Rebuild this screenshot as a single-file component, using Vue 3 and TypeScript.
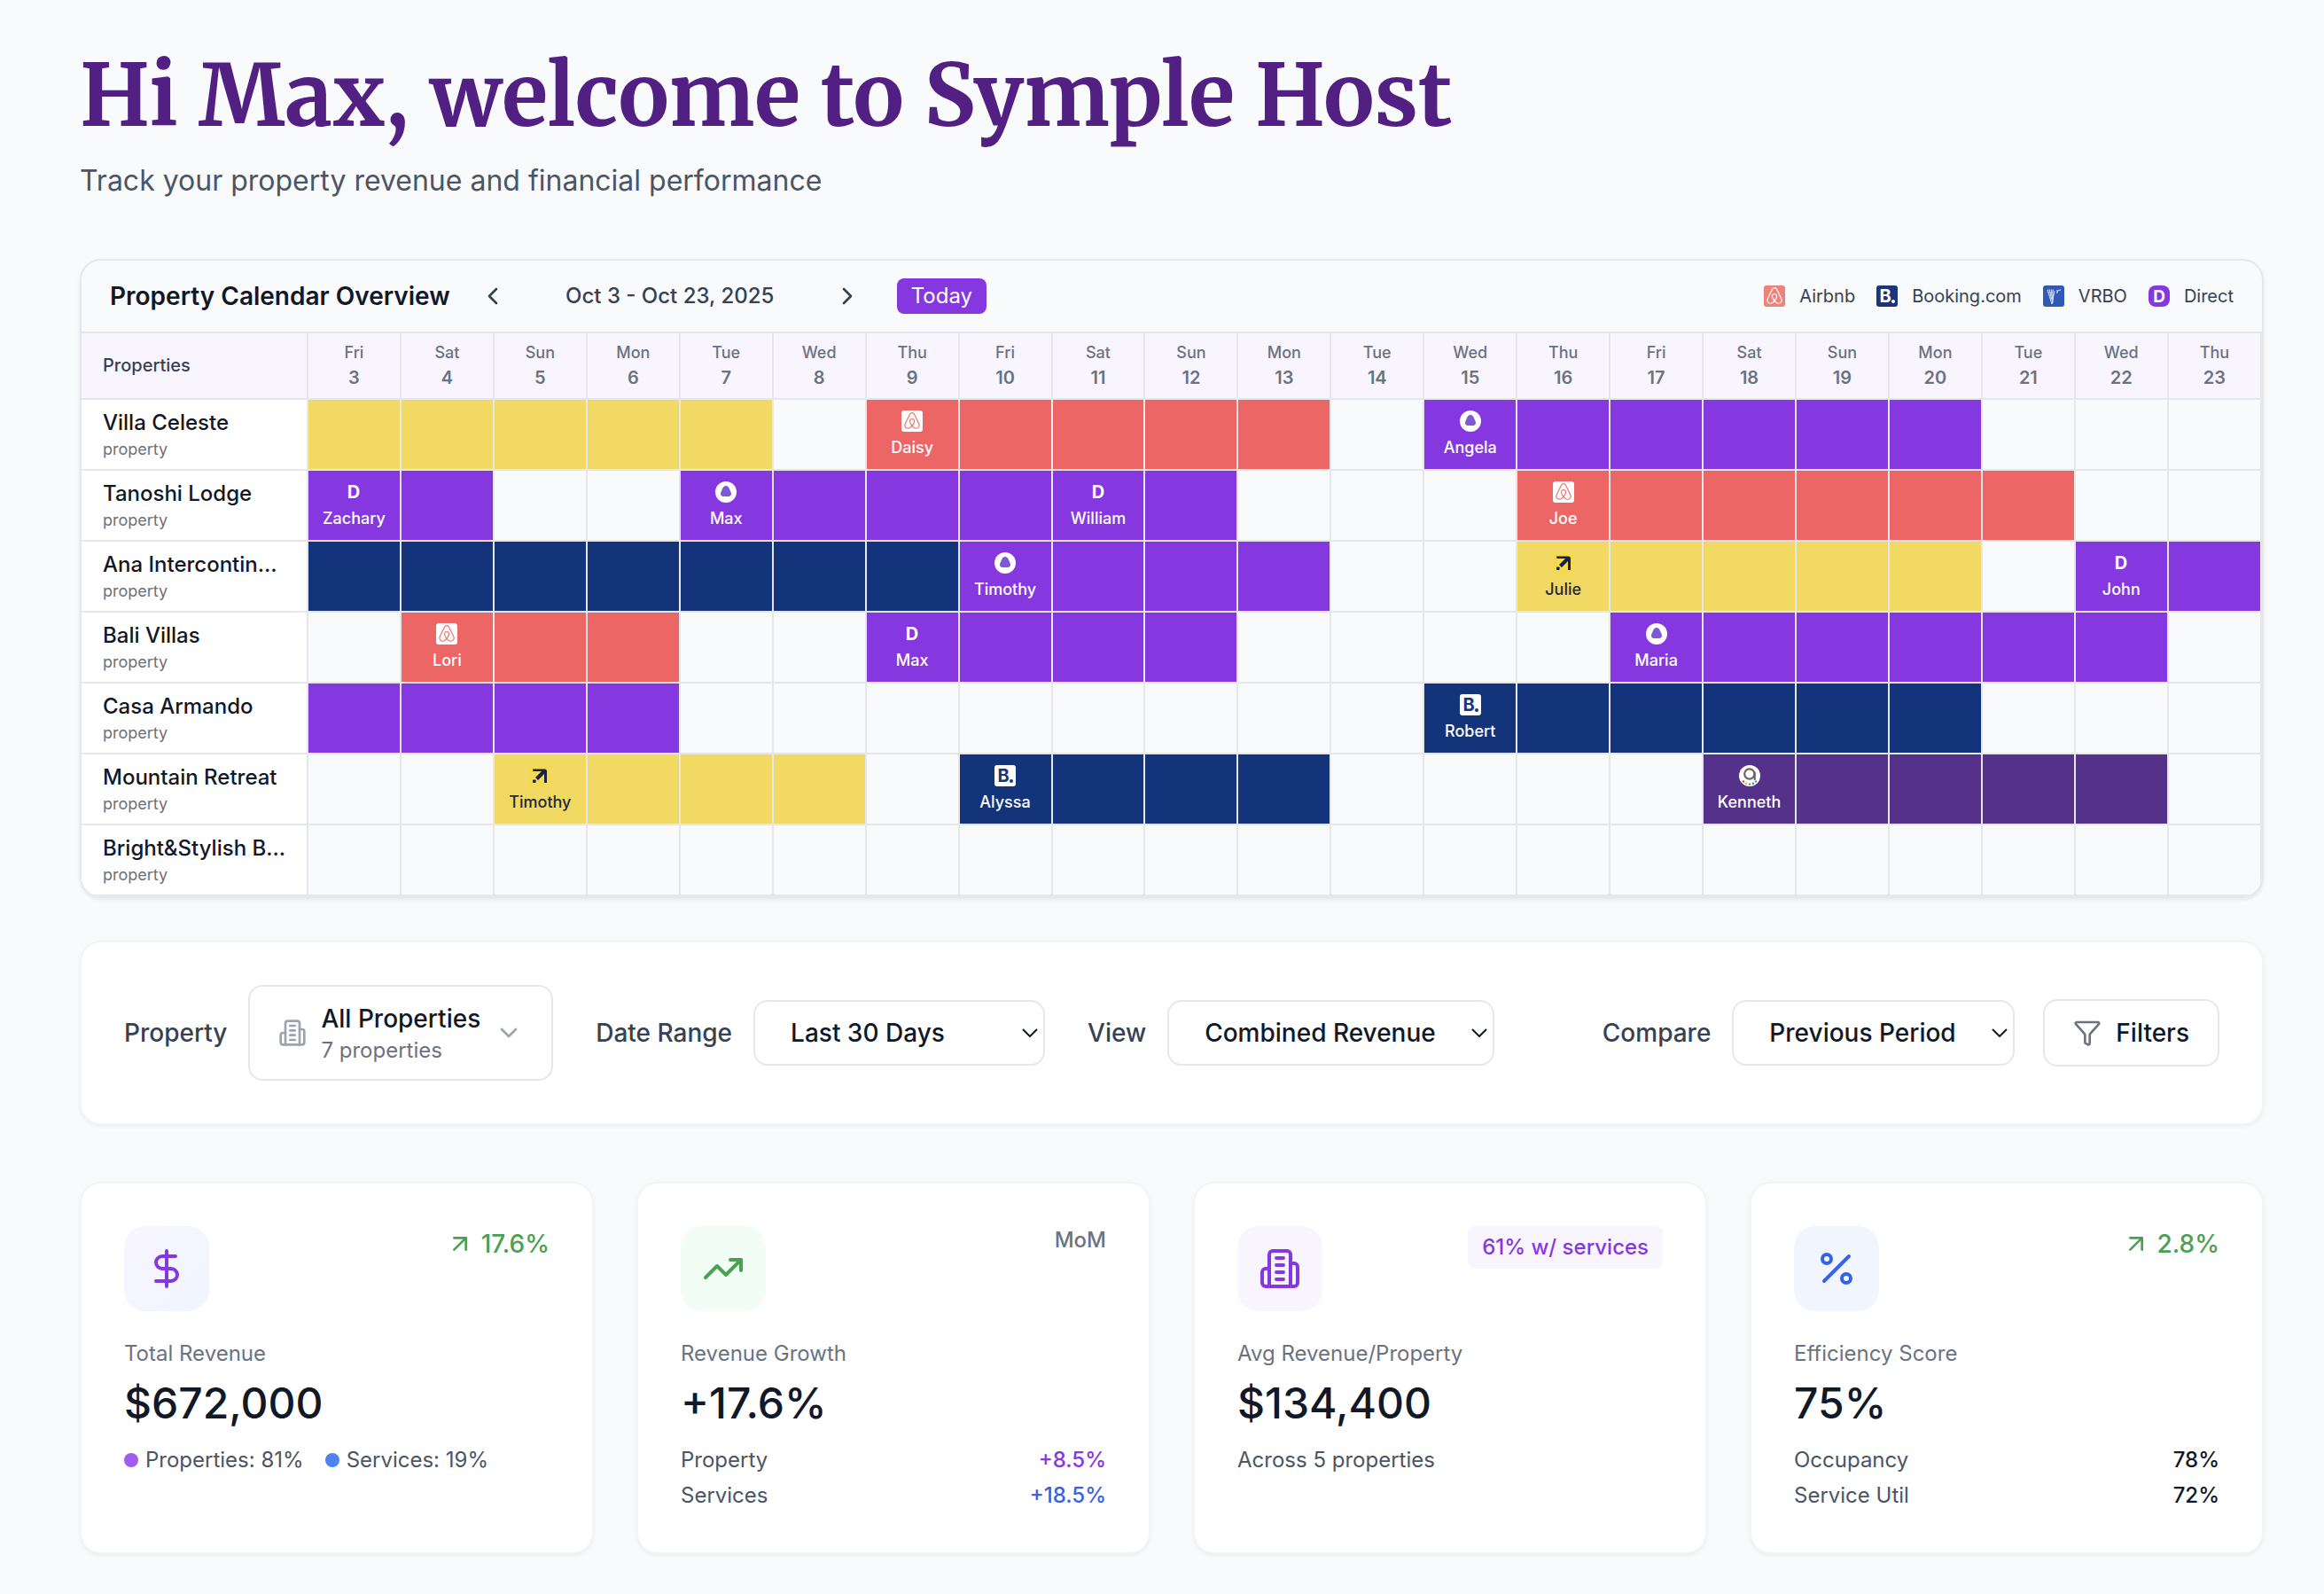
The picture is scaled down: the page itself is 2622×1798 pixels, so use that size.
<script setup lang="ts">
import { h, ref } from 'vue'
import type { FunctionalComponent, VNode } from 'vue'

type Channel = 'airbnb' | 'booking' | 'vrbo' | 'direct' | 'expedia' | 'hostaway' | 'agoda'

interface Booking {
  from: number
  to: number
  tone: 'red' | 'navy' | 'purple' | 'yellow' | 'plum'
  channel?: Channel
  guest?: string
}

interface Property {
  name: string
  bookings: Booking[]
}

const linePaths: Record<string, string[]> = {
  left: ['m15 18-6-6 6-6'],
  right: ['m9 18 6-6-6-6'],
  down: ['m6 9 6 6 6-6'],
  up: ['M7 7h10v10', 'M7 17 17 7'],
  funnel: [
    'M10 20a1 1 0 0 0 .553.895l2 1A1 1 0 0 0 14 21v-7a2 2 0 0 1 .517-1.341L21.74 4.67A1 1 0 0 0 21 3H3a1 1 0 0 0-.742 1.67l7.225 7.989A2 2 0 0 1 10 14z',
  ],
  building: [
    'M6 22V4a2 2 0 0 1 2-2h8a2 2 0 0 1 2 2v18Z',
    'M6 12H4a2 2 0 0 0-2 2v6a2 2 0 0 0 2 2h2',
    'M18 9h2a2 2 0 0 1 2 2v9a2 2 0 0 1-2 2h-2',
    'M10 6h4',
    'M10 10h4',
    'M10 14h4',
    'M10 18h4',
  ],
  dollar: ['M12 2v20', 'M17 5H9.5a3.5 3.5 0 0 0 0 7h5a3.5 3.5 0 0 1 0 7H6'],
  trend: ['M22 7 13.5 15.5 8.5 10.5 2 17', 'M16 7h6v6'],
  percent: [
    'M19 5 5 19',
    'M9 6.5a2.5 2.5 0 1 1-5 0a2.5 2.5 0 1 1 5 0',
    'M20 17.5a2.5 2.5 0 1 1-5 0a2.5 2.5 0 1 1 5 0',
  ],
}

const LineIcon: FunctionalComponent<{ name: string; size: number }> = (props) =>
  h(
    'svg',
    {
      width: props.size,
      height: props.size,
      viewBox: '0 0 24 24',
      fill: 'none',
      stroke: 'currentColor',
      'stroke-width': 2,
      'stroke-linecap': 'round',
      'stroke-linejoin': 'round',
      'aria-hidden': 'true',
    },
    linePaths[props.name].map((d) => h('path', { d })),
  )
LineIcon.props = ['name', 'size']

const airbnbMark =
  'M12.001 18.275c-1.353-1.697-2.148-3.184-2.413-4.457-.263-1.027-.16-1.848.291-2.465.477-.71 1.188-1.056 2.121-1.056s1.643.345 2.12 1.063c.446.61.558 1.432.286 2.465-.291 1.298-1.085 2.785-2.412 4.458zm9.601 1.14c-.185 1.246-1.034 2.28-2.2 2.783-2.253.98-4.483-.583-6.392-2.704 3.157-3.951 3.74-7.028 2.385-9.018-.795-1.14-1.933-1.695-3.394-1.695-2.944 0-4.563 2.49-3.927 5.382.37 1.565 1.352 3.343 2.917 5.332-.98 1.085-1.91 1.856-2.732 2.333-.636.344-1.245.558-1.828.609-2.679.399-4.778-2.2-3.825-4.88.132-.345.395-.98.845-1.961l.025-.053c1.464-3.178 3.242-6.79 5.285-10.795l.053-.132.58-1.116c.45-.822.635-1.19 1.351-1.643.346-.21.77-.315 1.246-.315.954 0 1.698.558 2.016 1.007.158.239.345.557.582.953l.558 1.089.08.159c2.041 4.004 3.821 7.608 5.279 10.794l.026.025.533 1.22.318.764c.243.613.294 1.222.213 1.858zm1.22-2.39c-.186-.583-.505-1.271-.9-2.094v-.03c-1.889-4.006-3.642-7.608-5.307-10.844l-.111-.163C15.317 1.461 14.468 0 12.001 0c-2.44 0-3.476 1.695-4.535 3.898l-.081.16c-1.669 3.236-3.421 6.843-5.303 10.847v.053l-.559 1.22c-.21.504-.317.768-.345.847C-.172 20.74 2.611 24 5.98 24c.027 0 .132 0 .265-.027h.372c1.75-.213 3.554-1.325 5.384-3.317 1.829 1.989 3.635 3.104 5.382 3.317h.372c.133.027.239.027.265.027 3.37.003 6.152-3.261 4.802-6.975z'

const letter = (text: string, x: number, y: number, size: number, fill: string): VNode =>
  h(
    'text',
    { x, y, fill, 'font-size': size, 'font-weight': 700, 'font-family': 'Inter, sans-serif', 'text-anchor': 'middle' },
    text,
  )

const tile = (fill: string, rx: number): VNode => h('rect', { width: 24, height: 24, rx, fill })

// Channel marks on a 24px tile; `solid` puts the brand colour behind the mark.
const ChannelIcon: FunctionalComponent<{ name: Channel; solid?: boolean }> = (props) => {
  let parts: VNode[] = []
  switch (props.name) {
    case 'airbnb':
      parts = [
        tile(props.solid ? '#f0817a' : '#ffffff', 3),
        h('path', { d: airbnbMark, transform: 'translate(2.6 2) scale(.785)', fill: props.solid ? '#ffffff' : '#ec7670' }),
      ]
      break
    case 'booking':
      parts = [
        tile(props.solid ? '#1b357c' : '#ffffff', 3),
        letter('B', 10, 19, 20, props.solid ? '#ffffff' : '#1b357c'),
        h('circle', { cx: 19, cy: 18, r: 2, fill: props.solid ? '#ffffff' : '#1b357c' }),
      ]
      break
    case 'vrbo':
      parts = [
        tile('#3159b8', 3),
        h('path', { d: 'M5 5 10 21M7 5 11 20M9 5 11 16M11 5v14M13 6 10 21', stroke: '#d5def4', 'stroke-width': 1 }),
        h('path', { d: 'M5 5h8M6 8h6M7 11h5M8 14h4', stroke: '#d5def4', 'stroke-width': 1, 'stroke-dasharray': '1 1' }),
        h('path', { d: 'M16 9V5M16 7c1-1 2-2 4-2', stroke: '#ffffff', 'stroke-width': 1, fill: 'none' }),
      ]
      break
    case 'direct':
      parts = props.solid
        ? [tile('#8638e0', 8), letter('D', 12, 19, 19, '#ffffff')]
        : [letter('D', 12, 19, 20, '#ffffff')]
      break
    case 'expedia':
      parts = [
        tile('#f5d94f', 3),
        h('path', { d: 'M4 4.5h13.5a2.5 2.5 0 0 1 2.5 2.5V20h-3V10L10 17 7 14l7-7H4.5Z', fill: '#1b2140' }),
        h('rect', { x: 4, y: 16.5, width: 3.6, height: 3.6, rx: 0.8, fill: '#1b2140' }),
      ]
      break
    case 'hostaway':
      parts = [
        h('circle', { cx: 12, cy: 12, r: 12, fill: '#ffffff' }),
        h('path', {
          d: 'M12 5c2 0 3.2 1.6 4.2 4 .9 2 1.8 3.6 1.8 5 0 2-1.2 3-3.2 3H9.2C7.2 17 6 16 6 14c0-1.4.9-3 1.8-5 1-2.4 2.2-4 4.2-4Z',
          fill: '#7d5ad2',
        }),
      ]
      break
    case 'agoda':
      parts = [
        h('circle', { cx: 12, cy: 12, r: 12, fill: '#ffffff' }),
        h('circle', { cx: 11.8, cy: 10, r: 5.6, fill: 'none', stroke: '#666666', 'stroke-width': 2.2 }),
        h('path', { d: 'M17.8 8v9', stroke: '#666666', 'stroke-width': 2 }),
        ...[
          [5, 18.4, '#c8403c'],
          [8, 20.8, '#e0b030'],
          [12, 21.6, '#4a9c50'],
          [16, 20.8, '#8a5aa8'],
          [19, 18.4, '#3f8fd0'],
        ].map(([cx, cy, fill]) => h('circle', { cx, cy, r: 1.2, fill })),
      ]
      break
  }
  return h('svg', { width: 24, height: 24, viewBox: '0 0 24 24', 'aria-hidden': 'true' }, parts)
}
ChannelIcon.props = { name: String, solid: Boolean }

const legend: { channel: Channel; label: string }[] = [
  { channel: 'airbnb', label: 'Airbnb' },
  { channel: 'booking', label: 'Booking.com' },
  { channel: 'vrbo', label: 'VRBO' },
  { channel: 'direct', label: 'Direct' },
]

const weekdays = ['Sun', 'Mon', 'Tue', 'Wed', 'Thu', 'Fri', 'Sat']
const days = Array.from({ length: 21 }, (_, i) => ({ date: i + 3, weekday: weekdays[(i + 5) % 7] }))

const properties: Property[] = [
  {
    name: 'Villa Celeste',
    bookings: [
      { from: 3, to: 7, tone: 'yellow' },
      { from: 9, to: 13, tone: 'red', channel: 'airbnb', guest: 'Daisy' },
      { from: 15, to: 20, tone: 'purple', channel: 'hostaway', guest: 'Angela' },
    ],
  },
  {
    name: 'Tanoshi Lodge',
    bookings: [
      { from: 3, to: 4, tone: 'purple', channel: 'direct', guest: 'Zachary' },
      { from: 7, to: 10, tone: 'purple', channel: 'hostaway', guest: 'Max' },
      { from: 11, to: 12, tone: 'purple', channel: 'direct', guest: 'William' },
      { from: 16, to: 21, tone: 'red', channel: 'airbnb', guest: 'Joe' },
    ],
  },
  {
    name: 'Ana Intercontin...',
    bookings: [
      { from: 3, to: 9, tone: 'navy' },
      { from: 10, to: 13, tone: 'purple', channel: 'hostaway', guest: 'Timothy' },
      { from: 16, to: 20, tone: 'yellow', channel: 'expedia', guest: 'Julie' },
      { from: 22, to: 23, tone: 'purple', channel: 'direct', guest: 'John' },
    ],
  },
  {
    name: 'Bali Villas',
    bookings: [
      { from: 4, to: 6, tone: 'red', channel: 'airbnb', guest: 'Lori' },
      { from: 9, to: 12, tone: 'purple', channel: 'direct', guest: 'Max' },
      { from: 17, to: 22, tone: 'purple', channel: 'hostaway', guest: 'Maria' },
    ],
  },
  {
    name: 'Casa Armando',
    bookings: [
      { from: 3, to: 6, tone: 'purple' },
      { from: 15, to: 20, tone: 'navy', channel: 'booking', guest: 'Robert' },
    ],
  },
  {
    name: 'Mountain Retreat',
    bookings: [
      { from: 5, to: 8, tone: 'yellow', channel: 'expedia', guest: 'Timothy' },
      { from: 10, to: 13, tone: 'navy', channel: 'booking', guest: 'Alyssa' },
      { from: 18, to: 22, tone: 'plum', channel: 'agoda', guest: 'Kenneth' },
    ],
  },
  { name: 'Bright&Stylish B...', bookings: [] },
]

const rows = properties.map((property) => ({
  name: property.name,
  cells: days.map(({ date }) => {
    const booking = property.bookings.find((b) => date >= b.from && date <= b.to)
    return { date, tone: booking?.tone, start: booking?.from === date ? booking : undefined }
  }),
}))

const range = ref('Last 30 Days')
const view = ref('Combined Revenue')
const compare = ref('Previous Period')
</script>

<template>
  <main class="page">
    <header class="intro">
      <h1>Hi Max, welcome to Symple Host</h1>
      <p>Track your property revenue and financial performance</p>
    </header>

    <section class="calendar">
      <div class="calendar-bar">
        <h2>Property Calendar Overview</h2>
        <div class="range-nav">
          <button type="button" class="icon-button" aria-label="Previous dates"><LineIcon name="left" :size="32" /></button>
          <span class="range-text">Oct 3 - Oct 23, 2025</span>
          <button type="button" class="icon-button" aria-label="Next dates"><LineIcon name="right" :size="32" /></button>
        </div>
        <button type="button" class="today">Today</button>
        <ul class="legend">
          <li v-for="item in legend" :key="item.label"><ChannelIcon :name="item.channel" solid />{{ item.label }}</li>
        </ul>
      </div>

      <table>
        <thead>
          <tr>
            <th scope="col" class="name-col">Properties</th>
            <th v-for="day in days" :key="day.date" scope="col">
              <span class="weekday">{{ day.weekday }}</span>
              <span class="date">{{ day.date }}</span>
            </th>
          </tr>
        </thead>
        <tbody>
          <tr v-for="row in rows" :key="row.name">
            <th scope="row" class="name-col">
              <span class="name">{{ row.name }}</span>
              <span class="kind">property</span>
            </th>
            <td v-for="cell in row.cells" :key="cell.date" :class="cell.tone">
              <div v-if="cell.start?.guest" class="stay">
                <ChannelIcon :name="cell.start.channel!" />
                <span>{{ cell.start.guest }}</span>
              </div>
            </td>
          </tr>
        </tbody>
      </table>
    </section>

    <section class="card filters">
      <div class="field">
        <label for="property">Property</label>
        <button id="property" type="button" class="picker">
          <LineIcon name="building" :size="32" />
          <span class="picker-text">
            <span class="picker-main">All Properties</span>
            <span class="picker-sub">7 properties</span>
          </span>
          <LineIcon name="down" :size="32" />
        </button>
      </div>
      <div class="field">
        <label for="range">Date Range</label>
        <div class="select range">
          <select id="range" v-model="range"><option>Last 30 Days</option></select>
          <svg width="18" height="10" viewBox="0 0 18 10" aria-hidden="true"><path d="m1 1 8 8 8-8" /></svg>
        </div>
      </div>
      <div class="field">
        <label for="view">View</label>
        <div class="select view">
          <select id="view" v-model="view"><option>Combined Revenue</option></select>
          <svg width="18" height="10" viewBox="0 0 18 10" aria-hidden="true"><path d="m1 1 8 8 8-8" /></svg>
        </div>
      </div>
      <div class="filters-end">
        <div class="field">
          <label for="compare">Compare</label>
          <div class="select compare">
            <select id="compare" v-model="compare"><option>Previous Period</option></select>
            <svg width="18" height="10" viewBox="0 0 18 10" aria-hidden="true"><path d="m1 1 8 8 8-8" /></svg>
          </div>
        </div>
        <button type="button" class="filter-button"><LineIcon name="funnel" :size="32" />Filters</button>
      </div>
    </section>

    <section class="kpis">
      <article class="card kpi">
        <div class="kpi-top">
          <span class="kpi-icon revenue"><LineIcon name="dollar" :size="48" /></span>
          <span class="change"><LineIcon name="up" :size="32" />17.6%</span>
        </div>
        <h3>Total Revenue</h3>
        <p class="value">$672,000</p>
        <div class="split">
          <span><i class="dot violet"></i>Properties: 81%</span>
          <span><i class="dot azure"></i>Services: 19%</span>
        </div>
      </article>

      <article class="card kpi">
        <div class="kpi-top">
          <span class="kpi-icon growth"><LineIcon name="trend" :size="48" /></span>
          <span class="period">MoM</span>
        </div>
        <h3>Revenue Growth</h3>
        <p class="value">+17.6%</p>
        <dl>
          <div><dt>Property</dt><dd class="text-purple">+8.5%</dd></div>
          <div><dt>Services</dt><dd class="text-blue">+18.5%</dd></div>
        </dl>
      </article>

      <article class="card kpi">
        <div class="kpi-top">
          <span class="kpi-icon average"><LineIcon name="building" :size="48" /></span>
          <span class="badge">61% w/ services</span>
        </div>
        <h3>Avg Revenue/Property</h3>
        <p class="value">$134,400</p>
        <p class="note">Across 5 properties</p>
      </article>

      <article class="card kpi">
        <div class="kpi-top">
          <span class="kpi-icon efficiency"><LineIcon name="percent" :size="48" /></span>
          <span class="change"><LineIcon name="up" :size="32" />2.8%</span>
        </div>
        <h3>Efficiency Score</h3>
        <p class="value">75%</p>
        <dl>
          <div><dt>Occupancy</dt><dd>78%</dd></div>
          <div><dt>Service Util</dt><dd>72%</dd></div>
        </dl>
      </article>
    </section>
  </main>
</template>

<style>
body {
  margin: 0;
  background: #f9fafc;
}
</style>

<style scoped>
.page {
  padding: 48px 68px 44px 90px;
  font-family: Inter, "Liberation Sans", sans-serif;
  font-size: 24px;
  line-height: 32px;
  color: #111827;
}

.page * {
  box-sizing: border-box;
}

h1,
h2,
h3,
p,
ul,
dl,
dd {
  margin: 0;
  padding: 0;
}

button,
select {
  font: inherit;
  color: inherit;
  cursor: pointer;
}

svg {
  display: block;
  flex: none;
}

.intro h1 {
  font-family: Merriweather, "Liberation Serif", serif;
  font-size: 96px;
  line-height: 120px;
  font-weight: 700;
  color: #521f83;
}

.intro p {
  margin-top: 16px;
  font-size: 32px;
  line-height: 40px;
  color: #4b5563;
}

.calendar {
  margin-top: 68px;
  border: 2px solid #e5e7eb;
  border-radius: 24px;
  overflow: hidden;
  box-shadow: 0 2px 4px rgba(0, 0, 0, 0.08);
}

.calendar-bar {
  display: flex;
  align-items: center;
  min-height: 82px;
  padding: 0 32px;
  border-bottom: 2px solid #e5e7eb;
}

.calendar-bar h2 {
  font-size: 28px;
  font-weight: 600;
}

.range-nav {
  display: flex;
  align-items: center;
  gap: 16px;
  margin: 0 32px 0 24px;
  color: #374151;
}

.icon-button {
  padding: 8px;
  border: 0;
  border-radius: 8px;
  background: none;
}

.range-text {
  min-width: 320px;
  text-align: center;
  font-weight: 500;
}

.today {
  padding: 4px 16px;
  border: 0;
  border-radius: 8px;
  background: #8638e0;
  color: #fff;
}

.legend {
  display: flex;
  gap: 24px;
  margin-left: auto;
  list-style: none;
  font-size: 20px;
  color: #374151;
}

.legend li {
  display: flex;
  align-items: center;
  gap: 16px;
}

table {
  width: 100%;
  table-layout: fixed;
  border-collapse: separate;
  border-spacing: 0;
}

th,
td {
  padding: 0;
  border: solid #e5e7eb;
  border-width: 0 2px 2px 0;
  text-align: center;
  vertical-align: middle;
}

thead th {
  height: 75px;
  padding-bottom: 2px;
  background: #f8f5ff;
  font-size: 20px;
  line-height: 28px;
  color: #6b7280;
}

tbody th,
tbody td {
  height: 80px;
  padding-top: 2px;
}

.name-col {
  width: 256px;
  padding-right: 22px;
  padding-left: 24px;
  text-align: left;
}

thead .name-col {
  font-weight: 500;
  color: #374151;
}

tbody .name-col {
  background: #fff;
}

.weekday,
.date,
.name,
.kind {
  display: block;
}

.weekday {
  font-size: 18px;
  font-weight: 500;
}

.date {
  font-weight: 600;
}

.name {
  overflow: hidden;
  white-space: nowrap;
  font-weight: 500;
}

.kind {
  font-size: 18px;
  line-height: 28px;
  font-weight: 400;
  color: #6b7280;
}

.stay {
  display: flex;
  flex-direction: column;
  align-items: center;
  gap: 4px;
  font-size: 18px;
  line-height: 28px;
  font-weight: 500;
}

.red {
  background: #ed6666;
  color: #fff;
}

.navy {
  background: #13347a;
  color: #fff;
}

.purple {
  background: #8638e0;
  color: #fff;
}

.yellow {
  background: #f2d964;
  color: #1f2937;
}

.plum {
  background: #56318a;
  color: #fff;
}

.card {
  border: 2px solid #f3f4f6;
  border-radius: 24px;
  background: #fff;
  box-shadow: 0 2px 4px rgba(0, 0, 0, 0.05);
}

.filters {
  display: flex;
  align-items: center;
  gap: 48px;
  margin-top: 48px;
  padding: 48px;
  font-size: 28px;
  font-weight: 500;
}

.field {
  display: flex;
  align-items: center;
  gap: 24px;
}

.field label {
  color: #374151;
}

.filters-end {
  display: flex;
  align-items: center;
  gap: 32px;
  margin-left: auto;
}

.picker,
.filter-button {
  display: flex;
  align-items: center;
  gap: 16px;
  padding: 16px 32px;
  border: 2px solid #e5e7eb;
  border-radius: 16px;
  background: #fff;
}

.picker svg {
  color: #9ca3af;
}

.picker-text {
  text-align: left;
}

.picker-main,
.picker-sub {
  display: block;
}

.picker-main {
  line-height: 40px;
}

.picker-sub {
  font-size: 24px;
  font-weight: 400;
  color: #6b7280;
}

.filter-button {
  line-height: 40px;
}

.filter-button svg {
  color: #6b7280;
}

.select {
  position: relative;
}

.select select {
  appearance: none;
  width: 100%;
  height: 74px;
  padding: 0 40px;
  border: 2px solid #e5e7eb;
  border-radius: 16px;
  background: #fff;
}

.select svg {
  position: absolute;
  top: 32px;
  right: 8px;
  fill: none;
  stroke: #111827;
  stroke-width: 2;
  pointer-events: none;
}

.range {
  width: 329px;
}

.view {
  width: 369px;
}

.compare {
  width: 319px;
}

.kpis {
  display: grid;
  grid-template-columns: repeat(4, 1fr);
  gap: 48px;
  margin-top: 64px;
}

.kpi {
  padding: 48px;
}

.kpi-top {
  display: flex;
  align-items: flex-start;
  justify-content: space-between;
  margin-bottom: 32px;
}

.kpi-icon {
  padding: 24px;
  border-radius: 24px;
}

.revenue {
  background: linear-gradient(135deg, #f8f5ff, #f0f5ff);
  color: #8638e0;
}

.growth {
  background: #f2fdf5;
  color: #4aa151;
}

.average {
  background: #f8f5ff;
  color: #8638e0;
}

.efficiency {
  background: #f0f5ff;
  color: #3762e3;
}

.change {
  display: flex;
  align-items: center;
  gap: 8px;
  font-size: 28px;
  line-height: 40px;
  font-weight: 500;
  color: #4aa151;
}

.period {
  font-weight: 500;
  color: #6b7280;
}

.badge {
  padding: 8px 16px;
  border-radius: 8px;
  background: #f8f5ff;
  font-weight: 500;
  color: #8638e0;
}

.kpi h3 {
  font-size: 24px;
  font-weight: 400;
  color: #6b7280;
}

.value {
  margin: 8px 0 16px;
  font-size: 48px;
  line-height: 64px;
  font-weight: 500;
}

.split {
  display: flex;
  gap: 24px;
  color: #4b5563;
}

.split span {
  display: flex;
  align-items: center;
  gap: 8px;
}

.dot {
  width: 16px;
  height: 16px;
  border-radius: 50%;
}

.violet {
  background: #a05cf0;
}

.azure {
  background: #4d82f0;
}

.note {
  color: #4b5563;
}

dl {
  display: grid;
  gap: 8px;
}

dl div {
  display: flex;
  justify-content: space-between;
}

dt {
  color: #4b5563;
}

dd {
  font-weight: 500;
}

.text-purple {
  color: #8638e0;
}

.text-blue {
  color: #3762e3;
}
</style>
